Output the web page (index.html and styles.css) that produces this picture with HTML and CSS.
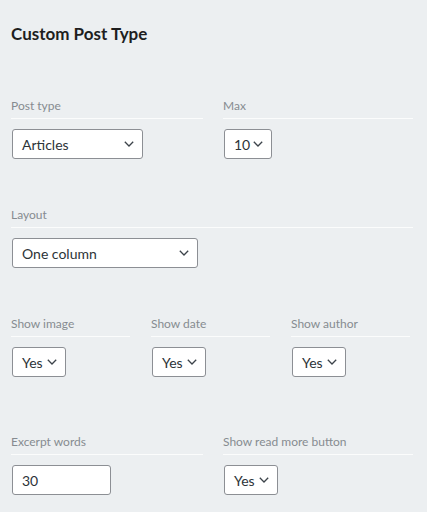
FILE: index.html
```html
<!DOCTYPE html>
<html lang="en">
<head>
    <meta charset="UTF-8">
    <meta name="viewport" content="width=device-width, initial-scale=1.0">
    <title>Custom Post Type</title>
    <link rel="stylesheet" href="styles.css">
</head>
<body>
    <div class="panel">
        <h1>Custom Post Type</h1>

        <div class="row two">
            <div class="field">
                <div class="label">Post type</div>
                <div class="select w-articles">
                    <span>Articles</span>
                    <svg width="10" height="6" viewBox="0 0 10 6"><path d="M0.8 0.8l4.2 4.2 4.2-4.2" fill="none" stroke="#3c434a" stroke-width="1.3"/></svg>
                </div>
            </div>
            <div class="field">
                <div class="label">Max</div>
                <div class="select w-max">
                    <span>10</span>
                    <svg width="10" height="6" viewBox="0 0 10 6"><path d="M0.8 0.8l4.2 4.2 4.2-4.2" fill="none" stroke="#3c434a" stroke-width="1.3"/></svg>
                </div>
            </div>
        </div>

        <div class="row">
            <div class="field">
                <div class="label">Layout</div>
                <div class="select w-layout">
                    <span>One column</span>
                    <svg width="10" height="6" viewBox="0 0 10 6"><path d="M0.8 0.8l4.2 4.2 4.2-4.2" fill="none" stroke="#3c434a" stroke-width="1.3"/></svg>
                </div>
            </div>
        </div>

        <div class="row three">
            <div class="field">
                <div class="label">Show image</div>
                <div class="select w-yes">
                    <span>Yes</span>
                    <svg width="10" height="6" viewBox="0 0 10 6"><path d="M0.8 0.8l4.2 4.2 4.2-4.2" fill="none" stroke="#3c434a" stroke-width="1.3"/></svg>
                </div>
            </div>
            <div class="field">
                <div class="label">Show date</div>
                <div class="select w-yes">
                    <span>Yes</span>
                    <svg width="10" height="6" viewBox="0 0 10 6"><path d="M0.8 0.8l4.2 4.2 4.2-4.2" fill="none" stroke="#3c434a" stroke-width="1.3"/></svg>
                </div>
            </div>
            <div class="field">
                <div class="label">Show author</div>
                <div class="select w-yes">
                    <span>Yes</span>
                    <svg width="10" height="6" viewBox="0 0 10 6"><path d="M0.8 0.8l4.2 4.2 4.2-4.2" fill="none" stroke="#3c434a" stroke-width="1.3"/></svg>
                </div>
            </div>
        </div>

        <div class="row two">
            <div class="field">
                <div class="label">Excerpt words</div>
                <input type="text" class="text-input" value="30">
            </div>
            <div class="field">
                <div class="label">Show read more button</div>
                <div class="select w-yes">
                    <span>Yes</span>
                    <svg width="10" height="6" viewBox="0 0 10 6"><path d="M0.8 0.8l4.2 4.2 4.2-4.2" fill="none" stroke="#3c434a" stroke-width="1.3"/></svg>
                </div>
            </div>
        </div>
    </div>
</body>
</html>
```

FILE: styles.css
```css
body {
    margin: 0;
    font-family: Lato, "Open Sans", sans-serif;
    background-color: #eceff1;
    color: #2c3338;
}
.panel {
    width: 402px;
    padding: 24px 14px 0 11px;
}
h1 {
    font-size: 17px;
    line-height: 20px;
    font-weight: 700;
    color: #1e1e1e;
    margin: 0 0 54px 0;
}
.row {
    margin-bottom: 48px;
}
.row.three {
    margin-bottom: 57px;
}
.row:last-child {
    margin-bottom: 0;
}
.two {
    display: grid;
    grid-template-columns: 192px 190px;
    column-gap: 20px;
}
.three {
    display: grid;
    grid-template-columns: repeat(3, 119px);
    column-gap: 21px;
}
.label {
    font-size: 12px;
    line-height: 16px;
    color: #868b90;
    padding-bottom: 4px;
    border-bottom: 1px solid #fbfcfc;
    margin-bottom: 10px;
}
.select {
    display: flex;
    align-items: center;
    justify-content: space-between;
    box-sizing: border-box;
    height: 30px;
    margin-left: 1px;
    padding: 0 8px 0 9px;
    background-color: #fff;
    border: 1px solid #8c8f94;
    border-radius: 3px;
    font-size: 14px;
    color: #2c3338;
}
.w-articles {
    width: 131px;
}
.w-layout {
    width: 186px;
}
.w-max {
    width: 48px;
}
.w-yes {
    width: 54px;
}
.text-input {
    display: block;
    box-sizing: border-box;
    width: 99px;
    height: 30px;
    margin: 0 0 0 1px;
    padding: 0 9px;
    background-color: #fff;
    border: 1px solid #8c8f94;
    border-radius: 3px;
    font-family: Lato, "Open Sans", sans-serif;
    font-size: 14px;
    color: #2c3338;
}
```
